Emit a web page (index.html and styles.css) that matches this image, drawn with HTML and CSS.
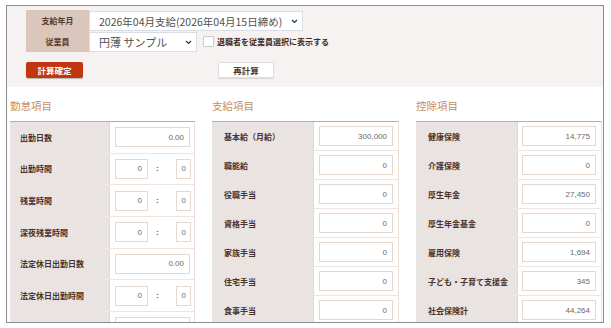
FILE: index.html
```html
<!DOCTYPE html>
<html lang="ja">
<head>
<meta charset="utf-8">
<title>給与計算</title>
<link rel="stylesheet" href="styles.css">
</head>
<body>
<div class="frame">
  <div class="panel">
    <div class="form">
      <div class="frow">
        <div class="flabel">支給年月</div>
        <div class="sel sel-wide"><span>2026年04月支給(2026年04月15日締め)</span><svg class="chev" width="7" height="5" viewBox="0 0 7 5"><polyline points="1,1 3.5,3.5 6,1" fill="none" stroke="#333" stroke-width="1.2"/></svg></div>
      </div>
      <div class="frow">
        <div class="flabel">従業員</div>
        <div class="sel sel-narrow"><span>円薄 サンプル</span><svg class="chev" width="7" height="5" viewBox="0 0 7 5"><polyline points="1,1 3.5,3.5 6,1" fill="none" stroke="#333" stroke-width="1.2"/></svg></div>
        <label class="chk"><span class="box"></span>退職者を従業員選択に表示する</label>
      </div>
    </div>
    <div class="btns">
      <button class="btn btn-primary">計算確定</button>
      <button class="btn btn-plain">再計算</button>
    </div>
  </div>

  <div class="cols">
    <section class="col col-attend">
      <h2 class="ctitle">勤怠項目</h2>
      <div class="tbl">
        <div class="trow"><div class="tl">出勤日数</div><div class="tv"><div class="inp full">0.00</div></div></div>
        <div class="trow"><div class="tl">出勤時間</div><div class="tv"><div class="inp h">0</div><span class="colon">:</span><div class="inp m">0</div></div></div>
        <div class="trow"><div class="tl">残業時間</div><div class="tv"><div class="inp h">0</div><span class="colon">:</span><div class="inp m">0</div></div></div>
        <div class="trow"><div class="tl">深夜残業時間</div><div class="tv"><div class="inp h">0</div><span class="colon">:</span><div class="inp m">0</div></div></div>
        <div class="trow"><div class="tl">法定休日出勤日数</div><div class="tv"><div class="inp full">0.00</div></div></div>
        <div class="trow"><div class="tl">法定休日出勤時間</div><div class="tv"><div class="inp h">0</div><span class="colon">:</span><div class="inp m">0</div></div></div>
        <div class="trow"><div class="tl"></div><div class="tv"><div class="inp full"></div></div></div>
      </div>
    </section>

    <section class="col col-pay">
      <h2 class="ctitle">支給項目</h2>
      <div class="tbl">
        <div class="trow"><div class="tl">基本給（月給）</div><div class="tv"><div class="inp full">300,000</div></div></div>
        <div class="trow"><div class="tl">職能給</div><div class="tv"><div class="inp full">0</div></div></div>
        <div class="trow"><div class="tl">役職手当</div><div class="tv"><div class="inp full">0</div></div></div>
        <div class="trow"><div class="tl">資格手当</div><div class="tv"><div class="inp full">0</div></div></div>
        <div class="trow"><div class="tl">家族手当</div><div class="tv"><div class="inp full">0</div></div></div>
        <div class="trow"><div class="tl">住宅手当</div><div class="tv"><div class="inp full">0</div></div></div>
        <div class="trow"><div class="tl">食事手当</div><div class="tv"><div class="inp full">0</div></div></div>
      </div>
    </section>

    <section class="col col-ded">
      <h2 class="ctitle">控除項目</h2>
      <div class="tbl">
        <div class="trow"><div class="tl">健康保険</div><div class="tv"><div class="inp full">14,775</div></div></div>
        <div class="trow"><div class="tl">介護保険</div><div class="tv"><div class="inp full">0</div></div></div>
        <div class="trow"><div class="tl">厚生年金</div><div class="tv"><div class="inp full">27,450</div></div></div>
        <div class="trow"><div class="tl">厚生年金基金</div><div class="tv"><div class="inp full">0</div></div></div>
        <div class="trow"><div class="tl">雇用保険</div><div class="tv"><div class="inp full">1,694</div></div></div>
        <div class="trow"><div class="tl">子ども・子育て支援金</div><div class="tv"><div class="inp full">345</div></div></div>
        <div class="trow"><div class="tl">社会保険計</div><div class="tv"><div class="inp full">44,264</div></div></div>
      </div>
    </section>
  </div>
</div>
</body>
</html>
```

FILE: styles.css
```css
html, body {
  margin: 0;
  background: #fff;
}

body {
  font-family: "Noto Sans CJK JP", "Noto Sans", sans-serif;
}

.frame {
  margin: 5px 0 0 6px;
  width: 598px;
  height: 318px;
  box-sizing: border-box;
  border: 1px solid #8c8c8c;
  overflow: hidden;
}

/* ---- top panel ---- */
.panel {
  background: #f6f2f2;
  height: 81px;
  box-sizing: border-box;
  padding: 4px 0 0 19px;
}

.frow {
  display: flex;
  align-items: center;
  height: 21px;
}

.flabel {
  width: 63px;
  height: 21px;
  flex: none;
  background: #dac6ba;
  color: #5a3c2c;
  font-size: 8px;
  font-weight: bold;
  display: flex;
  align-items: center;
  justify-content: center;
}

.sel {
  height: 20px;
  align-self: flex-end;
  box-sizing: border-box;
  border: 1px solid #d8dee6;
  background: #fff;
  display: flex;
  align-items: center;
  justify-content: space-between;
  padding: 0 4px 0 9px;
  font-size: 10.5px;
  color: #505050;
  white-space: nowrap;
}

.sel-wide { width: 214px; }
.sel-narrow { width: 108px; font-size: 11px; }

.chev { flex: none; }

.chk {
  display: flex;
  align-items: center;
  font-size: 8px;
  font-weight: bold;
  color: #3c2c24;
  white-space: nowrap;
}

.box {
  width: 11px;
  height: 11px;
  box-sizing: border-box;
  border: 1px solid #cbcbcb;
  border-radius: 1px;
  background: #fff;
  margin: 0 3px 0 6px;
}

.btns {
  display: flex;
  margin-top: 10px;
}

.btn {
  height: 16px;
  padding: 0;
  font-family: inherit;
  font-size: 8.5px;
  font-weight: bold;
  border-radius: 2px;
  display: flex;
  align-items: center;
  justify-content: center;
  box-sizing: border-box;
}

.btn-primary {
  width: 57px;
  background: #c0360e;
  color: #fff;
  border: none;
  box-shadow: 0 1px 1px rgba(0, 0, 0, 0.25);
}

.btn-plain {
  width: 56px;
  margin-left: 135px;
  background: #fff;
  color: #4a3a32;
  border: 1px solid #e0e0e0;
  box-shadow: 0 1px 1px rgba(0, 0, 0, 0.12);
}

/* ---- columns ---- */
.cols {
  display: grid;
  grid-template-columns: 185px 187px 186px;
  column-gap: 17px;
  padding-left: 3px;
}

.ctitle {
  margin: 0 0 8px;
  padding-top: 12px;
  line-height: 14px;
  font-size: 10.5px;
  font-weight: normal;
  color: #c88d5c;
}

.tbl {
  border-top: 1px solid #d6a67e;
  border-right: 1px solid #ece0d8;
}

.trow {
  display: flex;
  box-sizing: border-box;
  border-bottom: 1px solid #efe5de;
}

.col-attend .trow { height: 31.67px; }
.col-pay .trow,
.col-ded .trow { height: 29px; }

.tl {
  width: 100px;
  flex: none;
  box-sizing: border-box;
  background: #e9e3e2;
  border-right: 1px solid #e3d7cf;
  padding-left: 10px;
  font-size: 8px;
  font-weight: bold;
  color: #4b3128;
  display: flex;
  align-items: center;
  white-space: nowrap;
}

.col-pay .tl,
.col-ded .tl {
  width: 102px;
  padding-left: 12px;
}

.tv {
  flex: 1;
  display: flex;
  align-items: center;
  padding: 0 4px 0 5px;
}

.col-pay .tv { padding: 0 5px 0 5px; }
.col-ded .tv { padding: 0 5px 0 4px; }

.inp {
  height: 20px;
  box-sizing: border-box;
  border: 1px solid #e4d8cf;
  background: #fff;
  font-family: "Liberation Sans", Arial, sans-serif;
  font-size: 8px;
  color: #6a6a6a;
  display: flex;
  align-items: center;
  justify-content: flex-end;
  padding-right: 5px;
}

.inp.full { flex: 1; }
.inp.h { width: 33px; }
.inp.m { width: 15px; padding-right: 4px; }

.colon {
  width: 28px;
  box-sizing: border-box;
  padding-left: 8px;
  font-family: "Liberation Sans", Arial, sans-serif;
  font-size: 8px;
  font-weight: bold;
  color: #555;
}
```
